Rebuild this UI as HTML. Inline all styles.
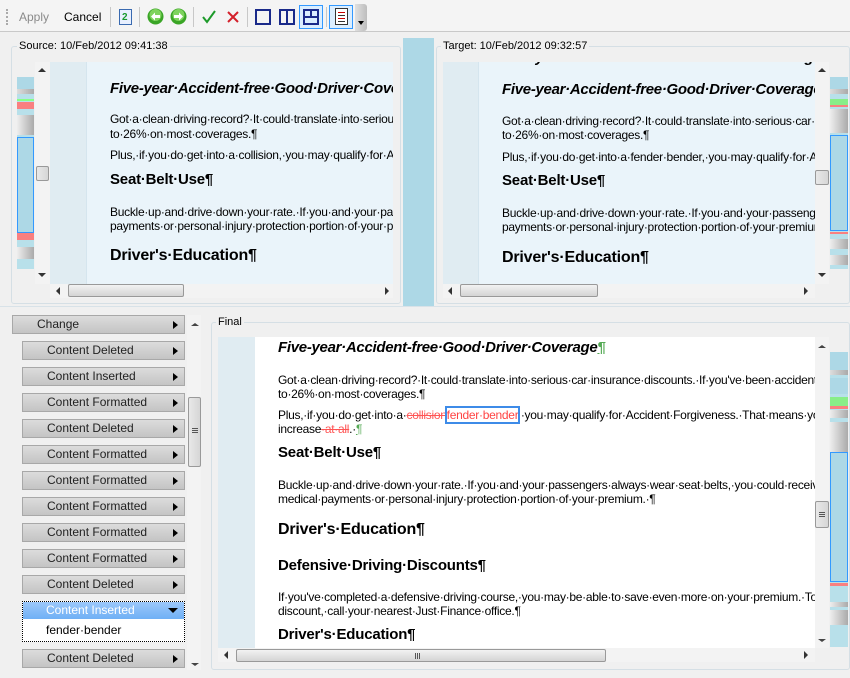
<!DOCTYPE html>
<html><head><meta charset="utf-8"><style>
*{margin:0;padding:0;box-sizing:border-box}
body{width:850px;height:678px;background:#f0f0f0;font-family:"Liberation Sans",Arial,sans-serif;font-size:12px;color:#000;position:relative;overflow:hidden}
.a{position:absolute}
.t{position:absolute;white-space:nowrap;line-height:14px;font-size:12px;letter-spacing:-0.28px}
.h{position:absolute;white-space:nowrap;font-weight:bold;font-size:15px;line-height:18px;letter-spacing:-0.2px}
.hi{position:absolute;white-space:nowrap;font-weight:bold;font-style:italic;font-size:15px;line-height:18px;letter-spacing:-0.3px}
.grp{position:absolute;border:1px solid #d5dfe5;border-radius:3px}
.lbl{position:absolute;background:#f0f0f0;padding:0 2px;font-size:11px;line-height:12px}
.vs{position:absolute;background:#f3f3f3}
.thumb{position:absolute;background:linear-gradient(90deg,#e8e8e8,#d6d6d6);border:1px solid #999;border-radius:2px}
.hthumb{position:absolute;background:linear-gradient(#f2f2f2,#d4d4d4);border:1px solid #999;border-radius:2px}
.btn{position:absolute;height:19px;background:linear-gradient(#dcdcdc,#c4c4c4);border:1px solid #a8a8a8;font-size:12px;line-height:17px;color:#222}
.btn span{position:absolute;left:24px}
.btn i{position:absolute;right:6px;top:5px;width:0;height:0;border-top:4px solid transparent;border-bottom:4px solid transparent;border-left:5px solid #000}
.ov{position:absolute;overflow:hidden}
.ov div{position:absolute;left:0;right:0}
.sep{position:absolute;top:7px;width:1px;height:20px;background:#c8c8c8}
</style></head><body>
<!-- toolbar -->
<div class="a" style="left:0;top:0;width:850px;height:32px;background:#f4f4f4;border-bottom:1px solid #c9c9c9"></div>
<div class="a" style="left:6px;top:9px;width:2px;height:16px;border-left:2px dotted #aaa"></div>
<div class="a" style="left:19px;top:10px;color:#8a8a8a;font-size:12px">Apply</div>
<div class="a" style="left:64px;top:10px;font-size:12px">Cancel</div>
<div class="sep" style="left:110px"></div>
<div class="a" style="left:119px;top:9px;width:13px;height:16px;border:1px solid #3a6ab0;background:#e8f0ff"><div class="a" style="left:2px;top:2px;font-size:10px;color:#1a9a30;font-weight:bold">2</div></div>
<div class="sep" style="left:139px"></div>
<svg class="a" style="left:147px;top:8px" width="17" height="17"><circle cx="8.5" cy="8.5" r="8" fill="#3aa526"/><circle cx="8.5" cy="7" r="6" fill="#7fd35e"/><path d="M4 8.5 L8 4.5 V7 H13 V10 H8 V12.5 Z" fill="#fff"/></svg>
<svg class="a" style="left:170px;top:8px" width="17" height="17"><circle cx="8.5" cy="8.5" r="8" fill="#3aa526"/><circle cx="8.5" cy="7" r="6" fill="#7fd35e"/><path d="M13 8.5 L9 4.5 V7 H4 V10 H9 V12.5 Z" fill="#fff"/></svg>
<div class="sep" style="left:193px"></div>
<svg class="a" style="left:201px;top:9px" width="16" height="16"><path d="M2 8 L6 13 L14 2" stroke="#1d9a2a" stroke-width="2" fill="none"/></svg>
<svg class="a" style="left:226px;top:10px" width="14" height="14"><path d="M2 2 L12 12 M12 2 L2 12" stroke="#d4202a" stroke-width="2"/></svg>
<div class="sep" style="left:247px"></div>
<div class="a" style="left:255px;top:9px;width:16px;height:16px;border:2px solid #1a2a8a"></div>
<div class="a" style="left:279px;top:9px;width:16px;height:16px;border:2px solid #1a2a8a"><div class="a" style="left:5px;top:0;width:2px;height:12px;background:#1a2a8a"></div></div>
<div class="a" style="left:299px;top:5px;width:24px;height:24px;border:1px solid #3399ff;background:#dbeeff"></div>
<div class="a" style="left:303px;top:9px;width:16px;height:16px;border:2px solid #1a2a8a"><div class="a" style="left:0;top:5px;width:12px;height:2px;background:#1a2a8a"></div><div class="a" style="left:5px;top:0;width:2px;height:6px;background:#1a2a8a"></div></div>
<div class="sep" style="left:326px"></div>
<div class="a" style="left:329px;top:5px;width:24px;height:24px;border:1px solid #3399ff;background:#dbeeff"></div>
<div class="a" style="left:335px;top:8px;width:13px;height:17px;border:1px solid #333;background:#fff"><div class="a" style="left:2px;top:3px;width:7px;height:1px;background:#c00;box-shadow:0 3px 0 #333,0 6px 0 #c00,0 9px 0 #333"></div></div>
<div class="a" style="left:355px;top:4px;width:12px;height:27px;background:linear-gradient(90deg,#e0e0e0,#bdbdbd);border-radius:0 3px 3px 0"><div class="a" style="left:3px;top:17px;border-left:3px solid transparent;border-right:3px solid transparent;border-top:4px solid #000"></div></div>

<!-- Source pane -->
<div class="grp" style="left:11px;top:46px;width:390px;height:258px"></div>
<div class="lbl" style="left:17px;top:40px">Source: 10/Feb/2012 09:41:38</div>
<div class="ov" style="left:17px;top:77px;width:17px;height:192px;background:#b8e0ea">
<div style="top:0;height:12px;background:#add8e6"></div><div style="top:12px;height:5px;background:linear-gradient(90deg,#ddd,#aaa)"></div>
<div style="top:22px;height:2px;background:#8f8"></div><div style="top:25px;height:7px;background:#f98080"></div>
<div style="top:38px;height:20px;background:linear-gradient(90deg,#eee,#aaa)"></div>
<div style="top:60px;height:96px;background:#add8e6;border:1px solid #3399ff"></div>
<div style="top:156px;height:7px;background:#f98080"></div>
<div style="top:170px;height:12px;background:linear-gradient(90deg,#eee,#aaa)"></div>
</div>
<div class="vs" style="left:35px;top:62px;width:15px;height:222px"></div>
<div class="a" style="left:38px;top:68px;border-left:4px solid transparent;border-right:4px solid transparent;border-bottom:4px solid #333"></div>
<div class="a" style="left:38px;top:273px;border-left:4px solid transparent;border-right:4px solid transparent;border-top:4px solid #333"></div>
<div class="thumb" style="left:36px;top:166px;width:13px;height:15px"></div>
<div class="ov" style="left:50px;top:62px;width:343px;height:222px;background:#eaf4fa">
<div style="top:0;left:0;width:37px;height:222px;background:#e0ecf2;border-right:1px solid #d5e5ee"></div>
</div>
<div class="ov" style="left:50px;top:62px;width:343px;height:222px">
<div class="hi" style="left:60px;top:18px">Five-year·Accident-free·Good·Driver·Coverage¶</div>
<div class="t" style="left:60px;top:50px">Got·a·clean·driving·record?·It·could·translate·into·serious·car·insurance</div>
<div class="t" style="left:60px;top:65px">to·26%·on·most·coverages.¶</div>
<div class="t" style="left:60px;top:86px">Plus,·if·you·do·get·into·a·collision,·you·may·qualify·for·Accident</div>
<div class="h" style="left:60px;top:109px">Seat·Belt·Use¶</div>
<div class="t" style="left:60px;top:143px">Buckle·up·and·drive·down·your·rate.·If·you·and·your·passengers</div>
<div class="t" style="left:60px;top:157px">payments·or·personal·injury·protection·portion·of·your·premium</div>
<div class="h" style="left:60px;top:185px;font-size:16px">Driver's·Education¶</div>
</div>
<div class="vs" style="left:50px;top:284px;width:343px;height:14px"></div>
<div class="a" style="left:56px;top:287px;border-top:4px solid transparent;border-bottom:4px solid transparent;border-right:4px solid #333"></div>
<div class="a" style="left:385px;top:287px;border-top:4px solid transparent;border-bottom:4px solid transparent;border-left:4px solid #333"></div>
<div class="hthumb" style="left:68px;top:284px;width:116px;height:13px"></div>

<!-- middle band -->
<div class="a" style="left:403px;top:38px;width:31px;height:268px;background:#add8e6"></div>

<!-- Target pane -->
<div class="grp" style="left:436px;top:46px;width:414px;height:258px"></div>
<div class="lbl" style="left:441px;top:40px">Target: 10/Feb/2012 09:32:57</div>
<div class="ov" style="left:443px;top:62px;width:372px;height:222px;background:#eaf4fa">
<div style="top:0;left:0;width:36px;height:222px;background:#e0ecf2;border-right:1px solid #d5e5ee"></div>
<div class="hi" style="left:59px;top:-13px">Five-year·Accident-free·Good·Driver·Coverage¶</div>
<div class="hi" style="left:59px;top:19px">Five-year·Accident-free·Good·Driver·Coverage¶</div>
<div class="t" style="left:59px;top:52px">Got·a·clean·driving·record?·It·could·translate·into·serious·car·insurance</div>
<div class="t" style="left:59px;top:66px">to·26%·on·most·coverages.¶</div>
<div class="t" style="left:59px;top:88px">Plus,·if·you·do·get·into·a·fender·bender,·you·may·qualify·for·Accident</div>
<div class="h" style="left:59px;top:110px">Seat·Belt·Use¶</div>
<div class="t" style="left:59px;top:144px">Buckle·up·and·drive·down·your·rate.·If·you·and·your·passengers·always</div>
<div class="t" style="left:59px;top:158px">payments·or·personal·injury·protection·portion·of·your·premium.</div>
<div class="h" style="left:59px;top:187px;font-size:16px">Driver's·Education¶</div>
</div>
<div class="vs" style="left:815px;top:62px;width:14px;height:222px"></div>
<div class="a" style="left:818px;top:68px;border-left:4px solid transparent;border-right:4px solid transparent;border-bottom:4px solid #333"></div>
<div class="a" style="left:818px;top:273px;border-left:4px solid transparent;border-right:4px solid transparent;border-top:4px solid #333"></div>
<div class="thumb" style="left:815px;top:170px;width:14px;height:15px"></div>
<div class="ov" style="left:830px;top:77px;width:18px;height:192px;background:#b8e0ea">
<div style="top:0;height:12px;background:#add8e6"></div><div style="top:12px;height:5px;background:linear-gradient(90deg,#ddd,#aaa)"></div>
<div style="top:22px;height:6px;background:#8e8"></div><div style="top:28px;height:2px;background:#f98080"></div>
<div style="top:32px;height:24px;background:linear-gradient(90deg,#eee,#aaa)"></div>
<div style="top:58px;height:96px;background:#add8e6;border:1px solid #3399ff"></div>
<div style="top:155px;height:2px;background:#f98080"></div>
<div style="top:162px;height:10px;background:linear-gradient(90deg,#eee,#aaa)"></div>
<div style="top:178px;height:10px;background:linear-gradient(90deg,#eee,#aaa)"></div>
</div>
<div class="vs" style="left:443px;top:284px;width:372px;height:14px"></div>
<div class="a" style="left:448px;top:287px;border-top:4px solid transparent;border-bottom:4px solid transparent;border-right:4px solid #333"></div>
<div class="a" style="left:804px;top:287px;border-top:4px solid transparent;border-bottom:4px solid transparent;border-left:4px solid #333"></div>
<div class="hthumb" style="left:460px;top:284px;width:138px;height:13px"></div>

<div class="a" style="left:0;top:306px;width:850px;height:1px;background:#d8e2e8"></div>

<!-- change list -->
<div class="btn" style="left:12px;top:315px;width:173px"><span style="left:24px">Change</span><i></i></div>
<div class="btn" style="left:22px;top:341px;width:163px"><span>Content Deleted</span><i></i></div>
<div class="btn" style="left:22px;top:367px;width:163px"><span>Content Inserted</span><i></i></div>
<div class="btn" style="left:22px;top:393px;width:163px"><span>Content Formatted</span><i></i></div>
<div class="btn" style="left:22px;top:419px;width:163px"><span>Content Deleted</span><i></i></div>
<div class="btn" style="left:22px;top:445px;width:163px"><span>Content Formatted</span><i></i></div>
<div class="btn" style="left:22px;top:471px;width:163px"><span>Content Formatted</span><i></i></div>
<div class="btn" style="left:22px;top:497px;width:163px"><span>Content Formatted</span><i></i></div>
<div class="btn" style="left:22px;top:523px;width:163px"><span>Content Formatted</span><i></i></div>
<div class="btn" style="left:22px;top:549px;width:163px"><span>Content Formatted</span><i></i></div>
<div class="btn" style="left:22px;top:575px;width:163px"><span>Content Deleted</span><i></i></div>
<div class="a" style="left:22px;top:601px;width:163px;height:41px;border:1px dotted #000;background:#fff"></div>
<div class="a" style="left:23px;top:602px;width:161px;height:17px;background:linear-gradient(#9cc8fa,#6fb0f5);color:#fff;line-height:16px"><span class="a" style="left:23px">Content Inserted</span><div class="a" style="right:6px;top:6px;border-left:5px solid transparent;border-right:5px solid transparent;border-top:5px solid #000"></div></div>
<div class="a" style="left:46px;top:623px;font-size:12px">fender·bender</div>
<div class="btn" style="left:22px;top:649px;width:163px"><span>Content Deleted</span><i></i></div>
<div class="vs" style="left:187px;top:315px;width:14px;height:355px"></div>
<div class="a" style="left:191px;top:323px;border-left:4px solid transparent;border-right:4px solid transparent;border-bottom:3px solid #444"></div>
<div class="a" style="left:191px;top:663px;border-left:4px solid transparent;border-right:4px solid transparent;border-top:3px solid #444"></div>
<div class="thumb" style="left:188px;top:397px;width:13px;height:70px"><div class="a" style="left:3px;top:30px;width:6px;height:1px;background:#555;box-shadow:0 2px 0 #555,0 4px 0 #555"></div></div>

<!-- Final pane -->
<div class="grp" style="left:211px;top:322px;width:639px;height:348px"></div>
<div class="lbl" style="left:216px;top:316px">Final</div>
<div class="ov" style="left:218px;top:337px;width:597px;height:311px;background:#fff">
<div style="top:0;left:0;width:37px;height:311px;background:#e0ecf2"></div>
<div class="hi" style="left:60px;top:2px">Five-year·Accident-free·Good·Driver·Coverage<span style="color:#5a5;text-decoration:underline">¶</span></div>
<div class="t" style="left:60px;top:36px">Got·a·clean·driving·record?·It·could·translate·into·serious·car·insurance·discounts.·If·you've·been·accident-free</div>
<div class="t" style="left:60px;top:50px">to·26%·on·most·coverages.¶</div>
<div class="t" style="left:60px;top:71px">Plus,·if·you·do·get·into·a·<span style="color:#f55;text-decoration:line-through">collision</span><span style="color:#f44;outline:2px solid #3d8be8;outline-offset:0">fender·bender</span>,·you·may·qualify·for·Accident·Forgiveness.·That·means·your·rate</div>
<div class="t" style="left:60px;top:85px">increase<span style="color:#f55;text-decoration:line-through">·at·all</span>.·<span style="color:#5a5;text-decoration:underline">¶</span></div>
<div class="h" style="left:60px;top:107px">Seat·Belt·Use¶</div>
<div class="t" style="left:60px;top:141px">Buckle·up·and·drive·down·your·rate.·If·you·and·your·passengers·always·wear·seat·belts,·you·could·receive·a</div>
<div class="t" style="left:60px;top:155px">medical·payments·or·personal·injury·protection·portion·of·your·premium.·¶</div>
<div class="h" style="left:60px;top:184px;font-size:16px">Driver's·Education¶</div>
<div class="h" style="left:60px;top:220px">Defensive·Driving·Discounts¶</div>
<div class="t" style="left:60px;top:253px">If·you've·completed·a·defensive·driving·course,·you·may·be·able·to·save·even·more·on·your·premium.·To·learn</div>
<div class="t" style="left:60px;top:267px">discount,·call·your·nearest·Just·Finance·office.¶</div>
<div class="h" style="left:60px;top:289px">Driver's·Education¶</div>
</div>
<div class="vs" style="left:815px;top:337px;width:14px;height:311px"></div>
<div class="a" style="left:818px;top:345px;border-left:4px solid transparent;border-right:4px solid transparent;border-bottom:3px solid #444"></div>
<div class="a" style="left:818px;top:639px;border-left:4px solid transparent;border-right:4px solid transparent;border-top:3px solid #444"></div>
<div class="thumb" style="left:815px;top:501px;width:14px;height:27px"><div class="a" style="left:3px;top:10px;width:6px;height:1px;background:#555;box-shadow:0 2px 0 #555,0 4px 0 #555"></div></div>
<div class="ov" style="left:830px;top:352px;width:18px;height:295px;background:#b8e0ea">
<div style="top:0;height:18px;background:#add8e6"></div><div style="top:18px;height:5px;background:linear-gradient(90deg,#ddd,#aaa)"></div>
<div style="top:26px;height:16px;background:#add8e6"></div>
<div style="top:45px;height:9px;background:#8e8"></div><div style="top:54px;height:3px;background:#f98080"></div>
<div style="top:58px;height:8px;background:linear-gradient(90deg,#eee,#aaa)"></div>
<div style="top:70px;height:30px;background:linear-gradient(90deg,#eee,#aaa)"></div>
<div style="top:100px;height:130px;background:#add8e6;border:1px solid #3399ff"></div>
<div style="top:231px;height:3px;background:#f98080"></div>
<div style="top:250px;height:5px;background:linear-gradient(90deg,#eee,#aaa)"></div>
<div style="top:258px;height:15px;background:linear-gradient(90deg,#eee,#aaa)"></div>
</div>
<div class="vs" style="left:218px;top:648px;width:597px;height:14px"></div>
<div class="a" style="left:224px;top:651px;border-top:4px solid transparent;border-bottom:4px solid transparent;border-right:4px solid #333"></div>
<div class="a" style="left:804px;top:651px;border-top:4px solid transparent;border-bottom:4px solid transparent;border-left:4px solid #333"></div>
<div class="hthumb" style="left:236px;top:649px;width:370px;height:13px"><div class="a" style="left:178px;top:3px;width:1px;height:6px;background:#555;box-shadow:2px 0 0 #555,4px 0 0 #555"></div></div>
</body></html>
